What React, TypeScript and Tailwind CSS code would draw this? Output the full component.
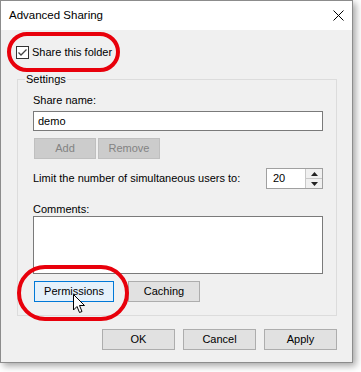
import React from "react";

function Btn({
  label,
  className = "",
}: {
  label: string;
  className?: string;
}) {
  return (
    <div
      className={`h-[21px] flex items-center justify-center border border-[#adadad] bg-[#e1e1e1] ${className}`}
    >
      {label}
    </div>
  );
}

export default function App() {
  return (
    <div className="relative w-[361px] h-[372px] bg-white text-[11px] leading-[15px] text-black font-['Liberation_Sans',Arial,sans-serif] overflow-hidden">
      {/* Dialog window */}
      <div className="w-[353px] h-[363px] border border-[#8c8c8c] bg-[#f0f0f0] shadow-[3px_3px_7px_rgba(0,0,0,0.35)] flex flex-col">
        {/* Title bar */}
        <div className="h-[29px] bg-white flex items-center justify-between pl-[8px] pr-[8px]">
          <span className="text-[11.5px]">Advanced Sharing</span>
          <svg width="11" height="11" viewBox="0 0 11 11">
            <path d="M0.5 0.5 L10.5 10.5 M10.5 0.5 L0.5 10.5" stroke="#000" strokeWidth="1" />
          </svg>
        </div>

        <div className="flex flex-col pl-[15px] pr-[15px] pt-[16px]">
          {/* Share checkbox */}
          <div className="h-[13px] flex items-center gap-[3px]">
            <div className="w-[13px] h-[13px] border border-[#333] bg-white flex items-center justify-center">
              <svg width="11" height="11" viewBox="0 0 11 11">
                <path d="M1.5 5.5 L4 8 L9.5 2.5" stroke="#444" strokeWidth="1.3" fill="none" />
              </svg>
            </div>
            <span>Share this folder</span>
          </div>

          {/* Settings group */}
          <div className="relative mt-[20px] ml-[1px] w-[320px] h-[237px] border border-[#dcdcdc]">
            <span className="absolute -top-[8px] left-[7px] px-[1px] bg-[#f0f0f0]">Settings</span>
            <div className="flex flex-col pl-[15px] pr-[13px] pt-[13px]">
              <span>Share name:</span>
              <div className="mt-[3px] h-[20px] border border-[#7a7a7a] bg-white flex items-center pl-[4px]">
                demo
              </div>
              <div className="mt-[7px] ml-[1px] flex gap-[2px] text-[#838383]">
                <div className="w-[62px] h-[21px] flex items-center justify-center border border-[#bfbfbf] bg-[#cccccc]">
                  Add
                </div>
                <div className="w-[62px] h-[21px] flex items-center justify-center border border-[#bfbfbf] bg-[#cccccc]">
                  Remove
                </div>
              </div>
              <div className="mt-[9px] h-[21px] flex items-center justify-between">
                <span>Limit the number of simultaneous users to:</span>
                <div className="w-[57px] h-[21px] flex border border-[#a0a0a0] bg-white">
                  <div className="flex-1 flex items-center pl-[6px]">20</div>
                  <div className="w-[17px] flex flex-col bg-[#f0f0f0] border-l border-[#c8c8c8]">
                    <div className="flex-1 flex items-center justify-center border-b border-[#c8c8c8]">
                      <svg width="7" height="4" viewBox="0 0 7 4">
                        <path d="M0 4 L3.5 0 L7 4 Z" fill="#222" />
                      </svg>
                    </div>
                    <div className="flex-1 flex items-center justify-center">
                      <svg width="7" height="4" viewBox="0 0 7 4">
                        <path d="M0 0 L3.5 4 L7 0 Z" fill="#222" />
                      </svg>
                    </div>
                  </div>
                </div>
              </div>
              <span className="mt-[13px] leading-[14px]">Comments:</span>
              <div className="h-[58px] border border-[#7a7a7a] bg-white" />
              <div className="mt-[7px] ml-[1px] flex gap-[14px]">
                <div className="w-[80px] h-[21px] flex items-center justify-center border border-[#0078d7] bg-[#e5f1fb]">
                  Permissions
                </div>
                <Btn label="Caching" className="w-[72px]" />
              </div>
            </div>
          </div>

          {/* Dialog buttons */}
          <div className="mt-[13px] flex justify-end gap-[8px]">
            <Btn label="OK" className="w-[73px]" />
            <Btn label="Cancel" className="w-[73px]" />
            <Btn label="Apply" className="w-[73px]" />
          </div>
        </div>
      </div>

      {/* Red highlight marks */}
      <div className="absolute left-[7px] top-[32px] w-[113px] h-[40px] rounded-full border-[4px] border-[#e8000b]" />
      <div className="absolute left-[17px] top-[265px] w-[112px] h-[56px] rounded-full border-[4px] border-[#e8000b]" />

      {/* Mouse cursor */}
      <svg className="absolute left-[73px] top-[294px]" width="13" height="20" viewBox="0 0 13 20">
        <path
          d="M0.5 0.5 L0.5 16 L4 12.5 L6.5 18.5 L9 17.5 L6.5 11.5 L11.5 11.5 Z"
          fill="#fff"
          stroke="#000"
          strokeWidth="1"
          strokeLinejoin="miter"
        />
      </svg>
    </div>
  );
}
